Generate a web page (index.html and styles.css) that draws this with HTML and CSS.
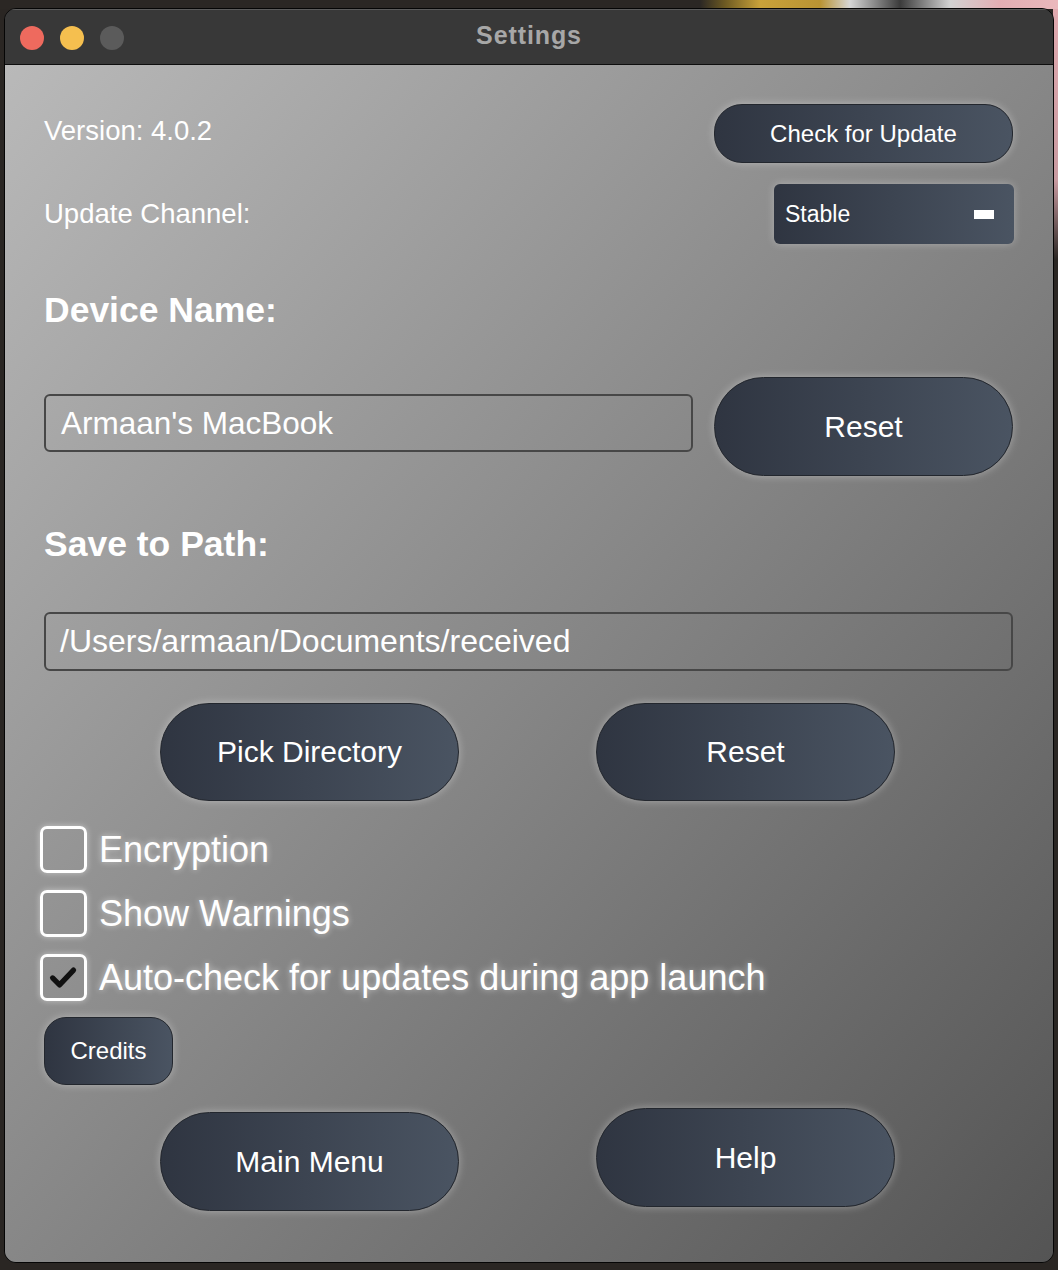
FILE: index.html
```html
<!DOCTYPE html>
<html lang="en">
<head>
<meta charset="utf-8">
<title>Settings</title>
<link rel="stylesheet" href="styles.css">
</head>
<body>
<div class="window">
  <div class="titlebar">
    <div class="lights">
      <span class="light light-red"></span>
      <span class="light light-yellow"></span>
      <span class="light light-gray"></span>
    </div>
    <div class="title">Settings</div>
    <div class="spacer"></div>
  </div>
  <div class="content">
    <div class="row row-version">
      <span class="label">Version: 4.0.2</span>
      <button class="btn btn-update">Check for Update</button>
    </div>
    <div class="row row-channel">
      <span class="label">Update Channel:</span>
      <div class="select"><span>Stable</span><span class="select-bar"></span></div>
    </div>

    <h2 class="heading">Device Name:</h2>
    <div class="row row-device">
      <div class="field field-device">Armaan's MacBook</div>
      <button class="btn btn-lg">Reset</button>
    </div>

    <h2 class="heading heading-path">Save to Path:</h2>
    <div class="field field-path">/Users/armaan/Documents/received</div>
    <div class="pair pair-path">
      <button class="btn btn-lg">Pick Directory</button>
      <button class="btn btn-lg">Reset</button>
    </div>

    <div class="checks">
      <div class="check"><span class="box"></span><span class="check-label">Encryption</span></div>
      <div class="check"><span class="box"></span><span class="check-label">Show Warnings</span></div>
      <div class="check"><span class="box box-on"><svg viewBox="0 0 47 47" width="43" height="43"><polyline points="11,24 19,32 35,15" fill="none" stroke="#111" stroke-width="6" stroke-linecap="round" stroke-linejoin="round"/></svg></span><span class="check-label">Auto-check for updates during app launch</span></div>
    </div>

    <button class="btn btn-credits">Credits</button>

    <div class="pair pair-bottom">
      <button class="btn btn-lg btn-main">Main Menu</button>
      <button class="btn btn-lg">Help</button>
    </div>
  </div>
</div>
</body>
</html>
```

FILE: styles.css
```css
* { box-sizing: border-box; }

html, body {
  margin: 0;
  padding: 0;
}

body {
  width: 1058px;
  height: 1270px;
  overflow: hidden;
  font-family: "Liberation Sans", Arial, sans-serif;
  background:
    linear-gradient(to right, #2b2724 0, #2b2724 700px, #6d5a22 725px, #c9a23a 760px, #b99333 820px, #d6d6d6 850px, #3b3b3b 900px, #d2d2d2 950px, #e3aeb3 1000px, #eab8bc 1058px) top left / 1058px 9px no-repeat,
    linear-gradient(to bottom, #e2aab0 0, #c89aa0 180px, #2a2623 260px) top right / 5px 1270px no-repeat,
    #2a2623;
}

.window {
  margin: 8px 0 0 4px;
  width: 1050px;
  height: 1255px;
  border: 1px solid #050505;
  border-radius: 12px;
  overflow: hidden;
  display: flex;
  flex-direction: column;
  background: #3a3a3a;
}

.titlebar {
  height: 56px;
  flex: none;
  background: #383838;
  border-top: 1px solid #5c5c5c;
  border-bottom: 1px solid #0e0e0e;
  display: grid;
  grid-template-columns: 1fr auto 1fr;
  align-items: center;
}

.lights {
  display: flex;
  gap: 16px;
  padding-left: 15px;
  padding-top: 1px;
}

.light {
  width: 24px;
  height: 24px;
  border-radius: 50%;
  display: block;
}
.light-red { background: #ee6a5e; }
.light-yellow { background: #f5bf4f; }
.light-gray { background: #5b5b5b; }

.title {
  color: #a7a7a7;
  font-weight: bold;
  font-size: 25px;
  letter-spacing: 0.9px;
  padding-bottom: 4px;
}

.content {
  flex: 1;
  padding: 39px 40px 0 39px;
  background: linear-gradient(to bottom right, #b9b9b9 0%, #878787 50%, #545454 100%);
  color: #fff;
  display: flex;
  flex-direction: column;
  align-items: stretch;
}

.row {
  display: flex;
  justify-content: space-between;
  align-items: center;
}

.label {
  font-size: 27.5px;
  color: #fff;
}

.row-version .label { padding-bottom: 6px; }

.btn {
  font-family: "Liberation Sans", Arial, sans-serif;
  color: #fff;
  background: linear-gradient(to right, #2f3541, #4a5462);
  border: 1px solid #23272e;
  box-shadow: 0 0 9px rgba(255, 255, 255, 0.35);
  padding: 0;
  cursor: pointer;
}

.btn-update {
  width: 299px;
  height: 59px;
  border-radius: 28px;
  font-size: 24px;
}

.row-channel { margin-top: 21px; }

.select {
  width: 240px;
  height: 60px;
  margin-right: -1px;
  border-radius: 6px;
  background: linear-gradient(to right, #2f3541, #4a5462);
  box-shadow: 0 0 9px rgba(255, 255, 255, 0.3);
  display: flex;
  align-items: center;
  justify-content: space-between;
  padding: 0 20px 0 11px;
  font-size: 23px;
}

.select-bar {
  width: 20px;
  height: 9px;
  background: #fff;
  display: block;
}

.heading {
  margin: 46px 0 47px 0;
  font-size: 35.5px;
  line-height: 40px;
  font-weight: bold;
  color: #fff;
}

.heading-path {
  margin: 48px 0 48px 0;
}

.row-device { align-items: flex-start; gap: 21px; }

.field {
  height: 58px;
  border: 2px solid #474747;
  border-radius: 6px;
  display: flex;
  align-items: center;
  padding-left: 15px;
  color: #fff;
}

.field-device {
  flex: 1;
  margin-top: 17px;
  font-size: 31.5px;
}

.field-path {
  font-size: 32px;
  height: 59px;
  padding-left: 14px;
}

.btn-lg {
  width: 299px;
  height: 99px;
  border-radius: 50px;
  font-size: 30px;
  flex: none;
}

.pair {
  display: flex;
  justify-content: center;
  gap: 137px;
  padding-right: 2px;
}

.pair-path { margin-top: 32px; }
.pair-path .btn-lg { height: 98px; }

.checks {
  margin-top: 25px;
  display: flex;
  flex-direction: column;
  gap: 17px;
}

.check {
  display: flex;
  align-items: center;
  gap: 12px;
  margin-left: -4px;
}

.box {
  width: 47px;
  height: 47px;
  border: 3px solid #fff;
  border-radius: 7px;
  box-shadow: 0 0 6px rgba(255, 255, 255, 0.45);
  display: flex;
  align-items: center;
  justify-content: center;
  flex: none;
}

.check-label {
  font-size: 36px;
  color: #fff;
  text-shadow: 0 0 6px rgba(255, 255, 255, 0.55);
}

.btn-credits {
  margin-top: 16px;
  width: 129px;
  height: 68px;
  border-radius: 22px;
  font-size: 24px;
  align-self: flex-start;
}

.pair-bottom {
  margin-top: 23px;
  align-items: flex-start;
}

.btn-main { margin-top: 4px; }
```
